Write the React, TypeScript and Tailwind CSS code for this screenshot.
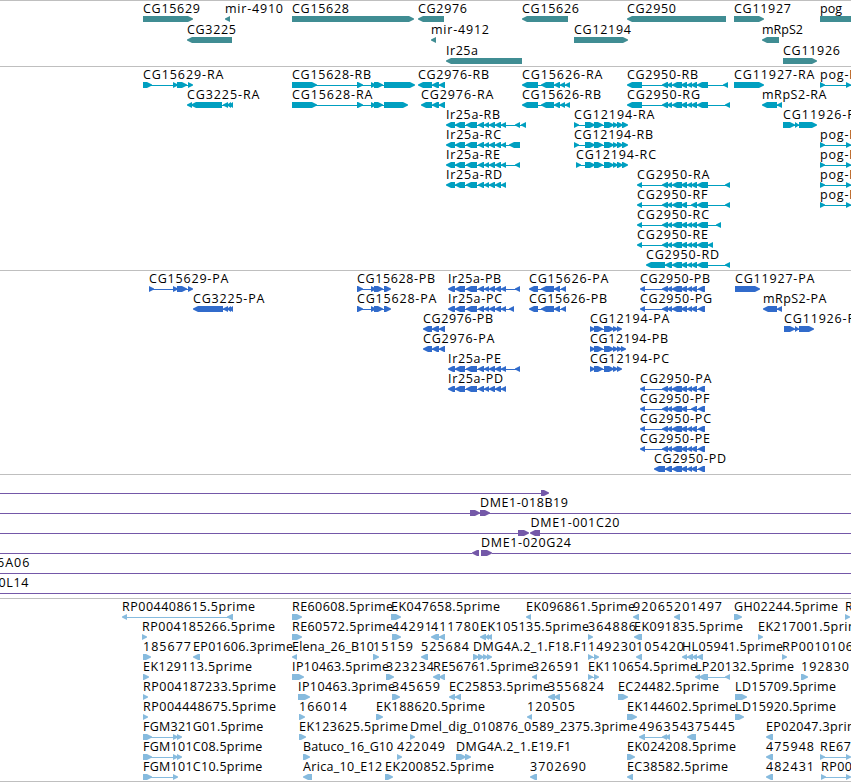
import React from "react";

type Dir = "l" | "r";
type Block = [number, number, Dir?];

interface Feature {
  row: number;
  x: number;
  dir: Dir;
  blocks: Block[];
  label?: string;
  line?: [number, number][];
}

interface TrackProps {
  features: Feature[];
  color: string;
  height: number;
  rowHeight?: number;
}

// advance widths of the label letters, in px
const ADVANCE: Record<string, number> = {
  A: 8.4, B: 7, C: 8, D: 9, E: 7, F: 6.4, G: 9, H: 9, I: 4, K: 8, L: 6, M: 10, P: 7, R: 8, S: 6,
  a: 7, c: 6, d: 8, e: 7, g: 7, i: 3, l: 3, m: 11, n: 8, o: 7, p: 8, r: 5, t: 4, u: 7.4,
  ".": 4, "-": 7, _: 5.4,
};

const labelWidth = (text: string) =>
  text.split("").reduce((sum, ch) => sum + (ADVANCE[ch] ?? 8), 0);

const f = (row: number, label: string, dir: Dir, ...blocks: Block[]): Feature => ({
  row,
  label,
  dir,
  blocks,
  x: blocks[0][0],
});

// slightly blunt arrow, pointing along the strand
const blockPath = (start: number, end: number, dir: Dir, top: number) => {
  const tip = Math.min(5, end - start);
  const [back, head, s] = dir === "r" ? [start, end, 1] : [end, start, -1];
  return [
    `M${back} ${top}`,
    `H${head - s * tip}`,
    `L${head - s} ${top + 2}`,
    `L${head} ${top + 2.5}`,
    `V${top + 3.5}`,
    `L${head - s} ${top + 4}`,
    `L${head - s * tip} ${top + 6}`,
    `H${back}Z`,
  ].join("");
};

const genes: Feature[] = [
  f(0, "CG15629", "r", [143, 193]),
  f(0, "mir-4910", "l", [225, 230]),
  f(0, "CG15628", "r", [292, 414]),
  f(0, "CG2976", "l", [418, 444]),
  f(0, "CG15626", "l", [522, 568]),
  f(0, "CG2950", "l", [627, 726]),
  f(0, "CG11927", "r", [734, 764]),
  f(0, "pog", "r", [820, 870]),
  f(1, "CG3225", "l", [187, 232]),
  f(1, "mir-4912", "l", [431, 436]),
  f(1, "CG12194", "r", [574, 628]),
  f(1, "mRpS2", "l", [762, 779]),
  f(2, "Ir25a", "l", [446, 522]),
  f(2, "CG11926", "r", [783, 817]),
];

// exons shared by several transcripts of the same gene
const ir25a: Block[] = [[455, 465], [466, 477], [478, 484], [484, 489], [489, 495], [495, 501], [501, 506]];
const cg2950: Block[] = [[662, 668], [667, 672], [672, 682], [681, 687], [687, 692], [691, 697]];
const cg2950Short: Block[] = [[662, 668], [667, 672], [672, 682], [681, 687], [691, 697]];
const cg2950Late: Block[] = [[665, 672], [672, 682], [681, 687], [687, 692], [691, 697]];
const cg12194: Block[] = [[585, 595], [594, 603], [604, 614], [613, 618], [617, 623], [622, 628]];
const cg12194p: Block[] = [[590, 595], [594, 603], [604, 614], [613, 618], [617, 622]];
const cg15626: Block[] = [[541, 554], [554, 560], [560, 565], [565, 570]];
const cg15628: Block[] = [[357, 363], [371, 376], [374, 383]];
const cg3225: Block[] = [[223, 228], [227, 231], [229, 233]];
const pog: Block[] = [[820, 825], [846, 851], [860, 865]];

const transcripts: Feature[] = [
  f(0, "CG15629-RA", "r", [143, 152], [173, 178], [177, 187], [188, 193]),
  f(0, "CG15628-RB", "r", [292, 317], ...cg15628, [384, 415]),
  f(0, "CG2976-RB", "l", [418, 432], [432, 439], [439, 445]),
  f(0, "CG15626-RA", "l", [522, 538], ...cg15626),
  f(0, "CG2950-RB", "l", [627, 642], ...cg2950, [697, 708], [723, 728]),
  f(0, "CG11927-RA", "r", [734, 764]),
  f(0, "pog-R", "r", ...pog),
  f(1, "CG3225-RA", "l", [187, 192], [191, 222], ...cg3225),
  f(1, "CG15628-RA", "r", [292, 317], ...cg15628, [384, 408]),
  f(1, "CG2976-RA", "l", [421, 432], [432, 439], [439, 445]),
  f(1, "CG15626-RB", "l", [522, 538], ...cg15626),
  f(1, "CG2950-RG", "l", [627, 642], ...cg2950, [697, 708], [725, 730]),
  f(1, "mRpS2-RA", "l", [762, 777], [777, 782]),
  f(2, "Ir25a-RB", "l", [446, 455], ...ir25a, [515, 520], [521, 526]),
  f(2, "CG12194-RA", "r", [574, 579], ...cg12194),
  f(2, "CG11926-R", "r", [783, 795], [795, 799], [799, 817]),
  f(3, "Ir25a-RC", "l", [446, 455], ...ir25a, [509, 520]),
  f(3, "CG12194-RB", "r", [574, 579], ...cg12194),
  f(3, "pog-R", "r", ...pog),
  f(4, "Ir25a-RE", "l", [446, 455], ...ir25a, [515, 520]),
  f(4, "CG12194-RC", "r", [576, 581], ...cg12194),
  f(4, "pog-R", "r", ...pog),
  f(5, "Ir25a-RD", "l", [446, 455], ...ir25a),
  f(5, "CG2950-RA", "l", [637, 642], ...cg2950, [697, 708], [725, 730]),
  f(5, "pog-R", "r", ...pog),
  f(6, "CG2950-RF", "l", [637, 642], ...cg2950Short, [697, 708], [725, 730]),
  f(6, "pog-R", "r", ...pog),
  f(7, "CG2950-RC", "l", [637, 642], ...cg2950, [697, 708], [716, 721]),
  f(8, "CG2950-RE", "l", [637, 642], ...cg2950, [697, 708], [708, 713]),
  f(9, "CG2950-RD", "l", [646, 665], ...cg2950Late, [697, 708], [725, 730]),
];

const proteins: Feature[] = [
  f(0, "CG15629-PA", "r", [149, 154], [173, 178], [177, 187], [188, 193]),
  f(0, "CG15628-PB", "r", ...cg15628, [384, 391]),
  f(0, "Ir25a-PB", "l", [448, 455], ...ir25a, [515, 520]),
  f(0, "CG15626-PA", "l", [529, 538], [541, 554], [554, 560], [561, 566]),
  f(0, "CG2950-PB", "l", [640, 645], ...cg2950, [698, 705]),
  f(0, "CG11927-PA", "r", [735, 760]),
  f(1, "CG3225-PA", "l", [193, 223], ...cg3225),
  f(1, "CG15628-PA", "r", ...cg15628, [384, 391]),
  f(1, "Ir25a-PC", "l", [448, 455], ...ir25a, [509, 514]),
  f(1, "CG15626-PB", "l", [529, 538], [541, 554], [554, 560], [561, 566]),
  f(1, "CG2950-PG", "l", [640, 645], ...cg2950, [698, 705]),
  f(1, "mRpS2-PA", "l", [763, 777], [777, 782]),
  f(2, "CG2976-PB", "l", [423, 432], [432, 439], [439, 445]),
  f(2, "CG12194-PA", "r", ...cg12194p),
  f(2, "CG11926-P", "r", [784, 795], [795, 799], [799, 814]),
  f(3, "CG2976-PA", "l", [423, 432], [432, 439], [439, 445]),
  f(3, "CG12194-PB", "r", ...cg12194p, [621, 626]),
  f(4, "Ir25a-PE", "l", [448, 455], ...ir25a, [515, 520]),
  f(4, "CG12194-PC", "r", ...cg12194p),
  f(5, "Ir25a-PD", "l", [448, 455], ...ir25a),
  f(5, "CG2950-PA", "l", [640, 645], ...cg2950, [698, 705]),
  f(6, "CG2950-PF", "l", [640, 645], ...cg2950Short, [698, 705]),
  f(7, "CG2950-PC", "l", [640, 645], ...cg2950, [698, 705]),
  f(8, "CG2950-PE", "l", [640, 645], ...cg2950, [698, 705]),
  f(9, "CG2950-PD", "l", [654, 665], ...cg2950Late, [698, 705]),
];

const clones: Feature[] = [
  { row: 0, x: 0, dir: "r", blocks: [[541, 549]], line: [[0, 541]] },
  { row: 1, x: 480, label: "DME1-018B19", dir: "r", blocks: [[470, 480], [480, 490]], line: [[0, 851]] },
  { row: 2, x: 530.5, label: "DME1-001C20", dir: "r", blocks: [[518, 529], [530, 540, "l"]], line: [[0, 518], [540, 851]] },
  { row: 3, x: 481, label: "DME1-020G24", dir: "r", blocks: [[472, 479, "l"], [481, 492]], line: [[0, 472], [492, 851]] },
  { row: 4, x: -3, label: "6A06", dir: "r", blocks: [], line: [[0, 851]] },
  { row: 5, x: -1.5, label: "0L14", dir: "r", blocks: [], line: [[0, 851]] },
];

const ests: Feature[] = [
  f(0, "RP004408615.5prime", "l", [122, 127], [227, 233]),
  f(0, "RE60608.5prime", "r", [292, 302]),
  f(0, "EK047658.5prime", "r", [391, 401]),
  f(0, "EK096861.5prime", "l", [526, 531]),
  f(0, "92065", "l", [633, 639]),
  f(0, "201497", "l", [674, 680]),
  f(0, "GH02244.5prime", "r", [734, 742]),
  f(0, "R", "r", [845, 850]),
  f(1, "RP004185266.5prime", "r", [142, 147]),
  f(1, "RE60572.5prime", "r", [292, 302]),
  f(1, "44291", "r", [392, 401]),
  f(1, "411780", "l", [431, 439], [439, 445]),
  f(1, "EK105135.5prime", "l", [480, 486], [485, 489], [487, 492]),
  f(1, "364886", "r", [588, 593]),
  f(1, "EK091835.5prime", "l", [634, 642]),
  f(1, "EK217001.5prime", "r", [758, 763]),
  f(2, "185677", "r", [143, 151]),
  f(2, "EP01606.3prime", "l", [193, 200]),
  f(2, "Elena_26_B10", "l", [292, 297]),
  f(2, "15159", "r", [373, 379]),
  f(2, "525684", "l", [421, 428]),
  f(2, "DMG4A.2_1.F18.F1", "r", [473, 479], [478, 484], [483, 488], [487, 492]),
  f(2, "149230", "r", [588, 593], [594, 599]),
  f(2, "105420", "l", [636, 642]),
  f(2, "HL05941.5prime", "l", [682, 687], [687, 693], [692, 697], [697, 703]),
  f(2, "RP0010106", "r", [782, 787]),
  f(3, "EK129113.5prime", "r", [143, 149]),
  f(3, "IP10463.5prime", "r", [292, 304]),
  f(3, "323234", "r", [386, 394]),
  f(3, "RE56761.5prime", "l", [433, 440], [439, 445]),
  f(3, "326591", "l", [532, 537]),
  f(3, "EK110654.5prime", "r", [588, 593], [594, 599]),
  f(3, "LP20132.5prime", "l", [695, 700], [699, 708], [725, 730]),
  f(3, "192830", "r", [801, 808]),
  f(4, "RP004187233.5prime", "r", [143, 148]),
  f(4, "IP10463.3prime", "r", [298, 310]),
  f(4, "345659", "r", [392, 400]),
  f(4, "EC25853.5prime", "l", [449, 455], [455, 461]),
  f(4, "3556824", "l", [548, 555], [554, 560]),
  f(4, "EC24482.5prime", "r", [618, 628]),
  f(4, "LD15709.5prime", "r", [735, 747]),
  f(5, "RP004448675.5prime", "r", [143, 148]),
  f(5, "166014", "r", [299, 305]),
  f(5, "EK188620.5prime", "r", [376, 383]),
  f(5, "120505", "l", [527, 532]),
  f(5, "EK144602.5prime", "r", [627, 637]),
  f(5, "LD15920.5prime", "r", [735, 744]),
  f(6, "FGM321G01.5prime", "r", [143, 152], [173, 178], [177, 182]),
  f(6, "EK123625.5prime", "r", [299, 306]),
  f(6, "Dmel_dig_010876_0589_2375.3prime", "r", [410, 415]),
  f(6, "496354", "l", [639, 645], [662, 667], [665, 670]),
  f(6, "375445", "l", [687, 696]),
  f(6, "EP02047.3prime", "l", [766, 773]),
  f(7, "FGM101C08.5prime", "r", [143, 152], [173, 178], [177, 182]),
  f(7, "Batuco_16_G10", "r", [303, 310]),
  f(7, "422049", "r", [397, 402]),
  f(7, "DMG4A.2_1.E19.F1", "r", [456, 466], [465, 471]),
  f(7, "EK024208.5prime", "r", [627, 635]),
  f(7, "475948", "l", [766, 773]),
  f(7, "RE67", "r", [820, 825], [846, 851]),
  f(8, "FGM101C10.5prime", "r", [143, 152], [173, 178]),
  f(8, "Arica_10_E12", "l", [303, 312]),
  f(8, "EK200852.5prime", "r", [385, 393]),
  f(8, "3702690", "l", [530, 537]),
  f(8, "EC38582.5prime", "l", [627, 633]),
  f(8, "482431", "l", [766, 773]),
  f(8, "RP00", "r", [821, 826], [846, 851]),
];

const Track = ({ features, color, height, rowHeight = 20 }: TrackProps) => {
  return (
    <section className="border-t border-[#bfbfbf]">
      <svg width={851} height={height} className="block overflow-hidden">
        {features.map((feature, i) => {
          const top = 15 + feature.row * rowHeight;
          const { blocks } = feature;
          const lines = feature.line ?? [[feature.x + 3, blocks[blocks.length - 1][1] - 3]];
          return (
            <g key={i}>
              {(feature.line || blocks.length > 1) &&
                lines.map(([x1, x2]) => (
                  <rect key={x1} x={x1} y={top + 3} width={x2 - x1} height={1} fill={color} />
                ))}
              {blocks.map(([start, end, dir]) => (
                <path key={start} d={blockPath(start, end, dir ?? feature.dir, top)} fill={color} />
              ))}
              {feature.label && (
                <text
                  x={feature.x}
                  y={top - 3}
                  textLength={labelWidth(feature.label)}
                  className="fill-black font-['Open_Sans','DejaVu_Sans',sans-serif] text-[12.5px]"
                >
                  {feature.label}
                </text>
              )}
            </g>
          );
        })}
      </svg>
    </section>
  );
};

const App = () => {
  return (
    <main className="w-[851px] overflow-hidden border-b border-[#bfbfbf] bg-white">
      <Track features={genes} color="#408d93" height={65} rowHeight={21} />
      <Track features={transcripts} color="#009fc0" height={203} />
      <Track features={proteins} color="#316bcb" height={203} />
      <Track features={clones} color="#7458a8" height={123} />
      <Track features={ests} color="#87bbde" height={182} />
    </main>
  );
};

export default App;
